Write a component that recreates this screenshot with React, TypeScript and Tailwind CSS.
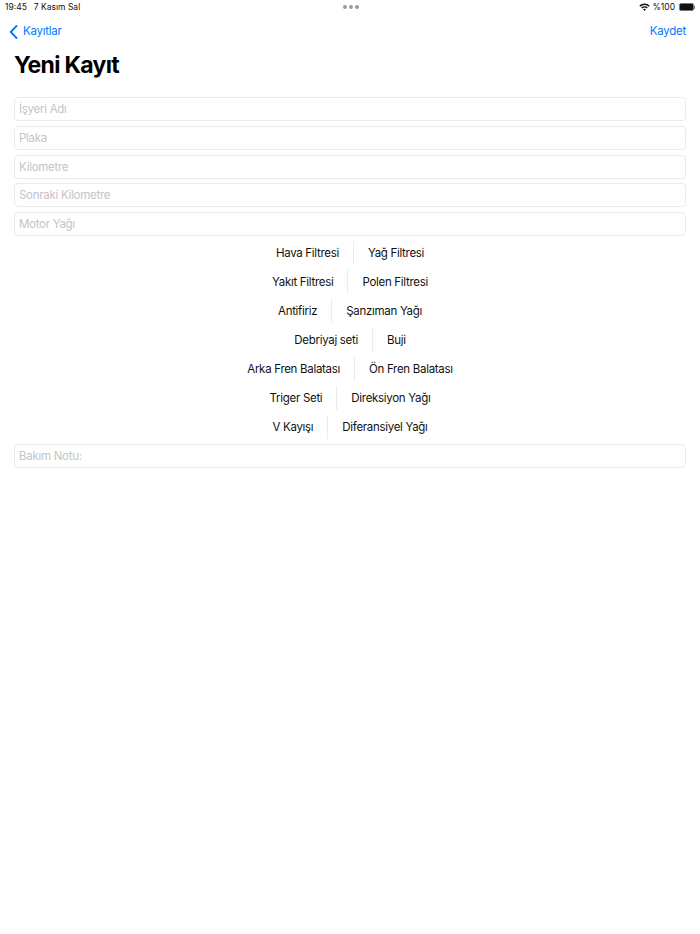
const fields = ["İşyeri Adı", "Plaka", "Kilometre", "Sonraki Kilometre", "Motor Yağı"];
const rows: [string, string][] = [
  ["Hava Filtresi", "Yağ Filtresi"],
  ["Yakıt Filtresi", "Polen Filtresi"],
  ["Antifiriz", "Şanzıman Yağı"],
  ["Debriyaj seti", "Buji"],
  ["Arka Fren Balatası", "Ön Fren Balatası"],
  ["Triger Seti", "Direksiyon Yağı"],
  ["V Kayışı", "Diferansiyel Yağı"],
];

function Field({ label }: { label: string }) {
  return (
    <div className="h-[24px] rounded-[4px] border border-[#ebebeb] px-[4px] pt-[1.4px] flex items-center text-[11.5px] tracking-[-0.28px] text-[#c4c4c6]">
      {label}
    </div>
  );
}

function Row({ left, right }: { left: string; right: string }) {
  return (
    <div className="h-[24.2px] flex justify-center items-stretch text-[11.5px] tracking-[-0.3px] text-[#111]">
      <div className="flex items-center pr-[14px] pt-[1.4px]">{left}</div>
      <div className="w-px bg-[#ebebeb]" />
      <div className="flex items-center pl-[14px] pt-[1.4px]">{right}</div>
    </div>
  );
}

export default function App() {
  return (
    <div className="w-[700px] h-[934px] bg-white font-['Inter'] overflow-hidden">
      <div className="h-[14px] px-[5px] flex items-center justify-between text-[8.5px] text-[#111] relative">
        <div className="flex gap-[7px]">
          <span>19:45</span>
          <span>7 Kasım Sal</span>
        </div>
        <div className="absolute left-[343px] top-[5px] flex gap-[2px]">
          <span className="w-[4px] h-[4px] rounded-full bg-[#9a9a9a]" />
          <span className="w-[4px] h-[4px] rounded-full bg-[#9a9a9a]" />
          <span className="w-[4px] h-[4px] rounded-full bg-[#9a9a9a]" />
        </div>
        <div className="flex items-center gap-[2px]">
          <svg width="11" height="8" viewBox="0 0 11 8">
            <path d="M0.3 2.6 A7.4 7.4 0 0 1 10.7 2.6 L9.6 3.8 A5.8 5.8 0 0 0 1.4 3.8 Z" fill="#111" />
            <path d="M2.2 4.5 A4.7 4.7 0 0 1 8.8 4.5 L7.7 5.6 A3.1 3.1 0 0 0 3.3 5.6 Z" fill="#111" />
            <path d="M4.1 6.4 A2 2 0 0 1 6.9 6.4 L5.5 7.9 Z" fill="#111" />
          </svg>
          <span>%100</span>
          <span className="ml-[2px] flex items-center">
            <span className="w-[15px] h-[8px] rounded-[2px] bg-[#111] border border-[#777]" />
            <span className="w-px h-[3px] bg-[#777]" />
          </span>
        </div>
      </div>

      <div className="h-[35px] px-[9px] flex items-center justify-between text-[11.5px] tracking-[-0.25px] text-[#007aff]">
        <div className="flex items-center gap-[5px]">
          <svg width="9" height="14" viewBox="0 0 9 14" fill="none">
            <path d="M7.5 1 L1.7 7 L7.5 13" stroke="#007aff" strokeWidth="1.8" strokeLinecap="round" strokeLinejoin="round" />
          </svg>
          <span>Kayıtlar</span>
        </div>
        <span className="mr-[5px]">Kaydet</span>
      </div>

      <div className="h-[33px] px-[14px] flex items-center text-[23px] font-bold text-black tracking-[-0.7px]">
        Yeni Kayıt
      </div>

      <div className="mt-[15px] px-[14px] flex flex-col gap-[4.8px]">
        {fields.map((f) => (
          <Field key={f} label={f} />
        ))}
        {rows.map(([l, r]) => (
          <Row key={l} left={l} right={r} />
        ))}
        <Field label="Bakım Notu:" />
      </div>
    </div>
  );
}
